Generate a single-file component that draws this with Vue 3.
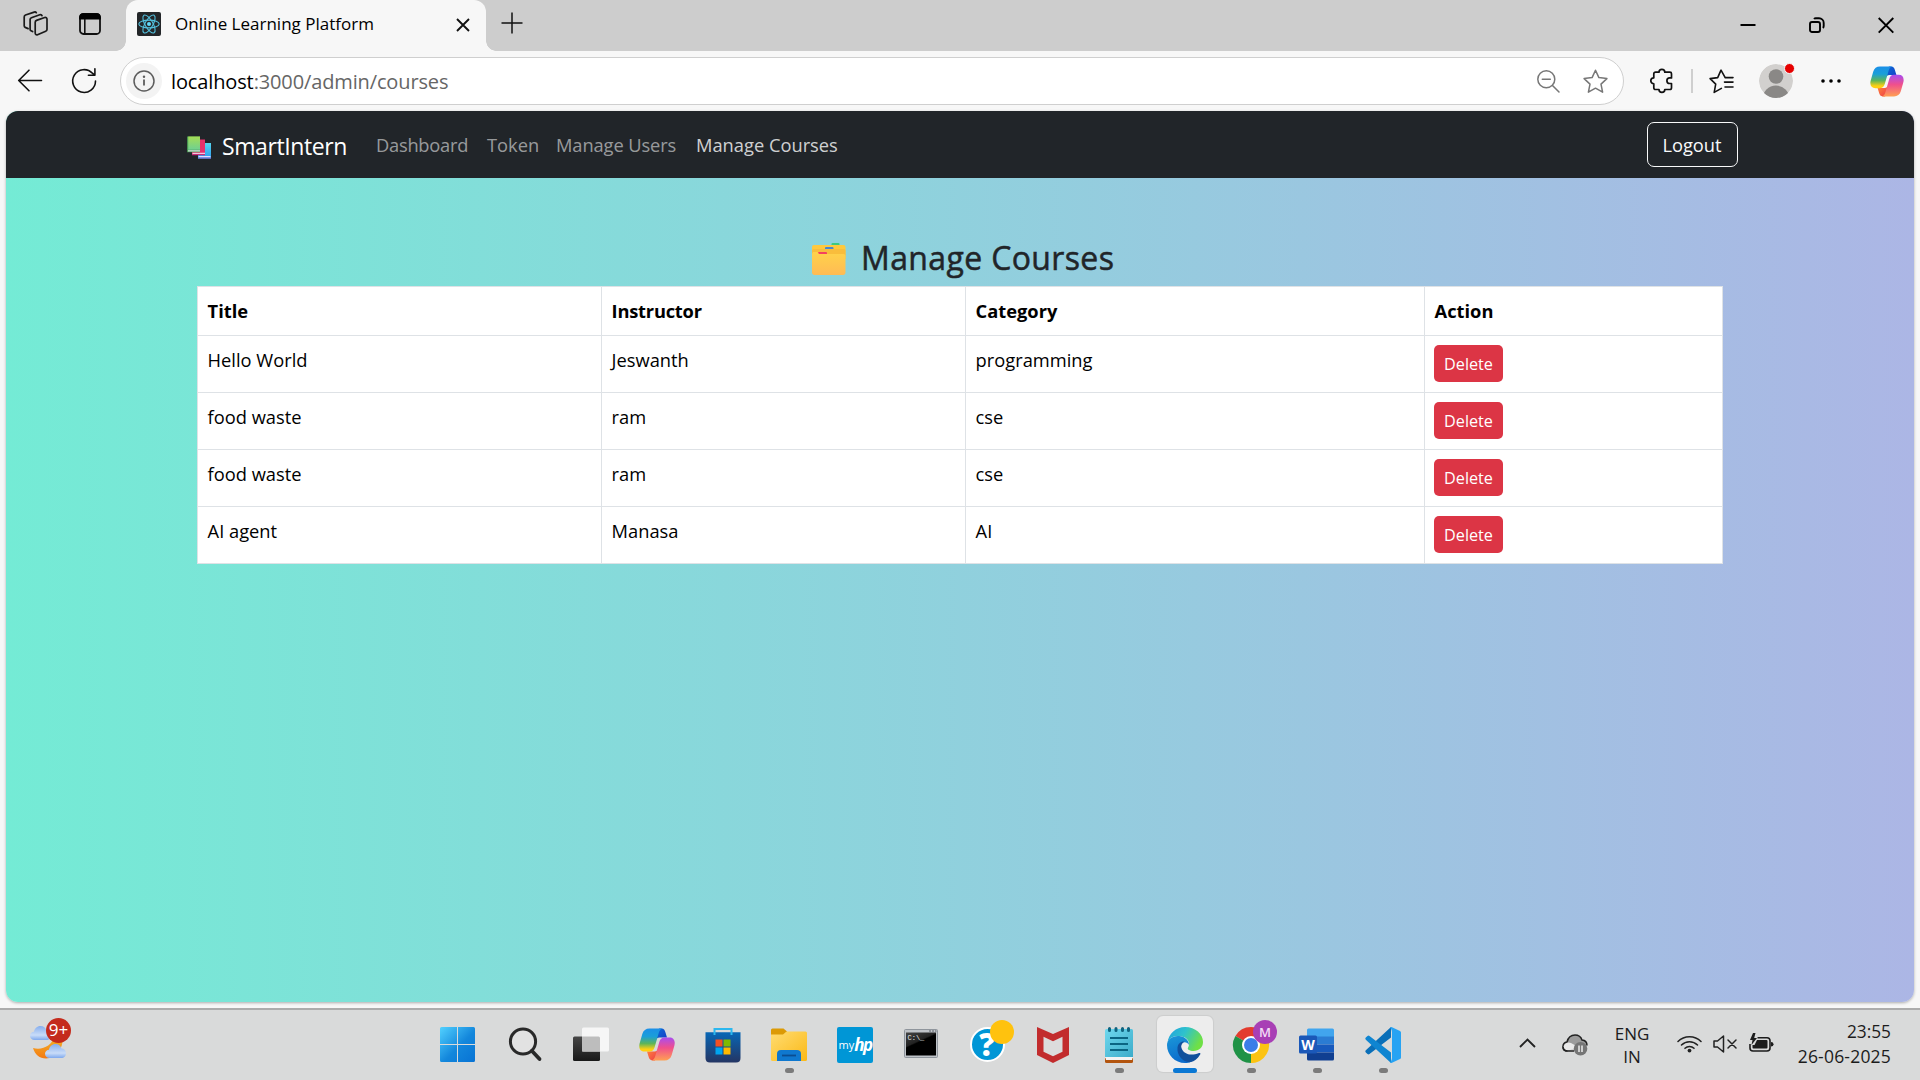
<script setup>
const links = [
  { label: 'Dashboard', cls: 'dash' },
  { label: 'Token', cls: 'token' },
  { label: 'Manage Users', cls: 'users' },
  { label: 'Manage Courses', cls: 'courses active' },
]
const courses = [
  { id: 1, title: 'Hello World', instructor: 'Jeswanth', category: 'programming' },
  { id: 2, title: 'food waste', instructor: 'ram', category: 'cse' },
  { id: 3, title: 'food waste', instructor: 'ram', category: 'cse' },
  { id: 4, title: 'AI agent', instructor: 'Manasa', category: 'AI' },
]
</script>

<template>
  <div class="screen">
    <svg class="defs" width="0" height="0" aria-hidden="true">
      <defs>
        <linearGradient id="cpA" x1="0" y1="0" x2="0" y2="1">
          <stop offset="0" stop-color="#1b8fe8" /><stop offset=".35" stop-color="#1a9fd8" /><stop offset=".65" stop-color="#5db55a" /><stop offset=".9" stop-color="#ffd012" />
        </linearGradient>
        <linearGradient id="cpB" x1="0" y1="0" x2="0" y2="1">
          <stop offset="0" stop-color="#a94cf0" /><stop offset=".45" stop-color="#f0508c" /><stop offset="1" stop-color="#ffa052" />
        </linearGradient>
        <linearGradient id="cpC" x1="0" y1="0" x2="1" y2="1">
          <stop offset="0" stop-color="#0b6fd8" /><stop offset="1" stop-color="#1839c4" />
        </linearGradient>
        <linearGradient id="cpD" x1="0" y1="0" x2="1" y2="1">
          <stop offset="0" stop-color="#ff8a3c" /><stop offset="1" stop-color="#ee3a48" />
        </linearGradient>
        <symbol id="copilot" viewBox="0 0 36 33">
          <path d="M20 .6h2.600c2.200 0 3.200 1.600 3.800 3.600l1.600 5.400h-7.500c-2 0-3.100 1-3.700 2.900z" fill="url(#cpC)" />
          <path d="M16 32.400h-2.600c-2.200 0-3.200-1.600-3.800-3.600L8 23.400h7.500c2 0 3.100-1 3.700-2.900z" fill="url(#cpD)" />
          <path d="M10.500.5h13c-2 .4-3 2-3.700 4.200L15.700 19c-.9 3-2.400 4.600-5.200 4.600H5.600C1.500 23.600-.6 20.500.6 15.600L3.300 6C4.400 2.400 6.800.5 10.500.5z" fill="url(#cpA)" />
          <path d="M25.500 32.500h-13c2-.4 3-2 3.700-4.200L20.300 14c.9-3 2.400-4.600 5.200-4.600h4.900c4.100 0 6.200 3.100 5 8L32.700 27c-1.100 3.600-3.500 5.500-7.200 5.500z" fill="url(#cpB)" />
        </symbol>
      </defs>
    </svg>

    <header class="tabs">
      <svg class="collections" width="26" height="26" viewBox="0 0 26 26" fill="none" stroke="#1a1a1a" stroke-width="1.700" stroke-linejoin="round" stroke-linecap="round">
        <path d="M12.200 11.200c0-.8.500-1.500 1.300-1.800l8.200-2.900c1.200-.4 2.300.4 2.300 1.600v10.300c0 .8-.5 1.500-1.300 1.800l-8.200 3.500c-1.200.5-2.300-.3-2.300-1.600z" />
        <path d="M9.600 20.600 8 19.800c-.6-.3-.9-.9-.9-1.600V8.600c0-.9.500-1.600 1.300-1.900l8.400-3c1-.3 1.900.1 2.200.9" />
        <path d="M5.100 17.600 2.200 16.400c-.7-.3-1-.9-1-1.600V5.900C1.200 5 1.700 4.300 2.500 4l8.700-2.900c.9-.3 1.700 0 2.100.6" />
      </svg>
      <svg class="actions" width="22" height="22" viewBox="0 0 22 22">
        <rect x="1" y="1" width="20" height="20" rx="3.500" fill="none" stroke="#111" stroke-width="1.800" />
        <path d="M.2 6.500V4A3.800 3.800 0 0 1 4 .2h14A3.800 3.800 0 0 1 21.800 4v2.500z" fill="#000" /><path d="M5.800 6v15" stroke="#111" stroke-width="1.600" />
      </svg>
      <div class="tab">
        <svg class="favicon" width="24" height="24" viewBox="0 0 24 24">
          <rect width="24" height="24" rx="2" fill="#232629" />
          <g fill="none" stroke="#53c1de" stroke-width="1.100">
            <ellipse cx="12" cy="12" rx="10.200" ry="3.900" /><ellipse cx="12" cy="12" rx="10.200" ry="3.900" transform="rotate(60 12 12)" /><ellipse cx="12" cy="12" rx="10.200" ry="3.900" transform="rotate(120 12 12)" />
          </g>
          <circle cx="12" cy="12" r="2" fill="#61dafb" />
        </svg>
        <span class="tab-title">Online Learning Platform</span>
        <svg class="tab-x" width="14" height="14" viewBox="0 0 14 14"><path d="M1 1l12 12M13 1L1 13" stroke="#111" stroke-width="1.900" /></svg>
      </div>
      <svg class="plus" width="22" height="22" viewBox="0 0 22 22"><path d="M11 .5v21M.5 11h21" stroke="#111" stroke-width="1.500" /></svg>
      <div class="win">
        <svg width="16" height="16" viewBox="0 0 16 16"><path d="M.5 8h15" stroke="#000" stroke-width="2" /></svg>
        <svg width="16" height="16" viewBox="0 0 16 16" fill="none" stroke="#000" stroke-width="1.900"><rect x="1" y="5" width="10" height="10" rx="2" /><path d="M5 2c.5-.6 1-.8 1.800-.8H10a4.700 4.700 0 0 1 4.700 4.700v3.200c0 .8-.2 1.300-.8 1.800" /></svg>
        <svg width="16" height="16" viewBox="0 0 16 16"><path d="M.7 1l14.600 14.600M15.300 1L.7 15.600" stroke="#000" stroke-width="1.900" /></svg>
      </div>
    </header>

    <div class="toolbar">
      <svg class="back" width="25" height="23" viewBox="0 0 25 23" fill="none" stroke="#111" stroke-width="1.600" stroke-linecap="round" stroke-linejoin="round"><path d="M23.500 11.500H.7M11 1.200L.7 11.500 11 21.800" /></svg>
      <svg class="refresh" width="25" height="26" viewBox="0 0 25 26" fill="none" stroke="#111" stroke-width="1.600" stroke-linecap="round" stroke-linejoin="round"><path d="M23.500 13A11.400 11.400 0 1 1 20.400 5.200l2.400 2M22.900.7v6.500h-6.500" /></svg>
      <div class="address">
        <div class="info"><svg width="22" height="22" viewBox="0 0 22 22" fill="none" stroke="#5c5c5c"><circle cx="11" cy="11" r="10" stroke-width="1.500" /><path d="M11 9.500v6" stroke-width="1.800" /><circle cx="11" cy="6.700" r="1.200" fill="#5c5c5c" stroke="none" /></svg></div>
        <span class="url"><b>localhost</b>:3000/admin/courses</span>
        <svg class="zoomout" width="23" height="23" viewBox="0 0 23 23" fill="none" stroke="#777" stroke-width="1.500" stroke-linecap="round"><circle cx="9.300" cy="9.300" r="8.500" /><path d="M15.500 15.500l6.500 6.500M5.300 9.300h8" /></svg>
        <svg class="star" width="25" height="25" viewBox="0 0 25 25" fill="none" stroke="#777" stroke-width="1.500" stroke-linejoin="round"><path d="M12.500 1.200l3.400 7.400 8 1-5.900 5.500 1.600 8.100-7.100-4-7.100 4L7 15.100 1.100 9.600l8-1z" /></svg>
      </div>
      <svg class="puzzle" width="23" height="25" viewBox="0 0 23 25" fill="none" stroke="#111" stroke-width="1.700" stroke-linejoin="round"><path d="M9 4.200a2.900 2.900 0 0 1 5.800 0h5.100c1 0 1.600.7 1.600 1.600v4.100h-1.800a2.700 2.700 0 0 0 0 5.600h1.800v4.300c0 1-.7 1.700-1.600 1.700h-5.100a2.900 2.900 0 0 1-5.800 0H5.500c-1 0-1.700-.7-1.700-1.700v-4a3 3 0 0 1 0-6V5.800c0-.9.700-1.600 1.700-1.600z" /></svg>
      <i class="sep"></i>
      <svg class="favs" width="25" height="25" viewBox="0 0 25 25" fill="none" stroke="#111" stroke-width="1.600" stroke-linejoin="round" stroke-linecap="round"><path d="M19.500 8.600h-3.300L12 1.200 8.700 8.600l-7.600 1 5.600 5.500-1.500 8.300 7.200-4M16 8.600h8M15.500 13.100H24M16 18h8" /></svg>
      <div class="avatar">
        <svg width="34" height="34" viewBox="0 0 34 34"><defs><clipPath id="avc"><circle cx="17" cy="17" r="17" /></clipPath></defs><g clip-path="url(#avc)"><circle cx="17" cy="17" r="17" fill="#d2d0ce" /><circle cx="17" cy="12.500" r="7.300" fill="#8a8886" /><circle cx="17" cy="35" r="13.500" fill="#8a8886" /></g></svg>
        <i></i>
      </div>
      <svg class="more" width="20" height="4" viewBox="0 0 20 4"><circle cx="2" cy="2" r="1.800" /><circle cx="10" cy="2" r="1.800" /><circle cx="18" cy="2" r="1.800" /></svg>
      <svg class="cop" width="34" height="31"><use href="#copilot" /></svg>
    </div>

    <main class="page">
      <nav class="nav">
        <div class="container">
          <svg class="books" width="24" height="23" viewBox="0 0 24 23">
            <defs>
              <linearGradient id="bkG" x1="0" y1="0" x2="0" y2="1"><stop offset="0" stop-color="#a5dd55" /><stop offset="1" stop-color="#6fd092" /></linearGradient>
              <linearGradient id="bkB" x1="0" y1="0" x2="0" y2="1"><stop offset="0" stop-color="#55d5ee" /><stop offset="1" stop-color="#2b9df0" /></linearGradient>
            </defs>
            <path d="M11 7h13v15.500H11z" fill="url(#bkB)" /><path d="M11.500 20h12v1.300h-12z" fill="#e5dcff" /><path d="M11 21.500h13v1H11z" fill="#9a7be0" />
            <path d="M5 3.500h13V19H5z" fill="#e5316b" /><path d="M5.500 16.700H18V18H5.500z" fill="#f3c5df" /><path d="M5 18.200h13v1H5z" fill="#c02a7d" />
            <path d="M0 .5h13v15.800H0z" fill="#46914f" /><path d="M1.200.5H13v13.300H1.200z" fill="url(#bkG)" /><path d="M1 14.200h12v1.200H1z" fill="#d7e9e2" />
          </svg>
          <span class="brand">SmartIntern</span>
          <a v-for="l in links" :key="l.label" :class="['link', l.cls]">{{ l.label }}</a>
          <button class="logout">Logout</button>
        </div>
      </nav>
      <h3>
        <svg width="34" height="33" viewBox="0 0 34 33">
          <defs><linearGradient id="fd" x1="0" y1="0" x2="0" y2="1"><stop offset="0" stop-color="#ffd24a" /><stop offset="1" stop-color="#ffbb55" /></linearGradient></defs>
          <rect x="19.500" y="0" width="8" height="4" rx="1" fill="#3fc97f" />
          <rect x="0" y="2" width="33.500" height="12" rx="2" fill="#ffc93e" />
          <rect x="13" y="4" width="8.500" height="4" rx="1" fill="#4a87d0" />
          <path d="M0 8c0-1.500 1-2 2-2h29.500c1 0 2 .5 2 2v8H0z" fill="#f9bd3c" />
          <rect x="6" y="9" width="9" height="4" rx="1" fill="#f5415f" />
          <path d="M0 11.500C0 9.500 1 9 2 9h3c1 0 1.400 2 2.500 2h24c1 0 2 .7 2 2v16.500c0 1.500-1 2.500-2.500 2.500H2.500C1 32 0 31 0 29.500z" fill="url(#fd)" />
        </svg>
        <span>Manage Courses</span>
      </h3>
      <table>
        <colgroup><col class="c1" /><col class="c2" /><col class="c3" /><col class="c4" /></colgroup>
        <thead><tr><th>Title</th><th class="t2">Instructor</th><th>Category</th><th>Action</th></tr></thead>
        <tbody>
          <tr v-for="c in courses" :key="c.id">
            <td>{{ c.title }}</td><td>{{ c.instructor }}</td><td>{{ c.category }}</td><td class="act"><button class="delete">Delete</button></td>
          </tr>
        </tbody>
      </table>
    </main>

    <footer class="taskbar">
      <div class="weather">
        <svg width="42" height="42" viewBox="0 0 42 42">
          <defs>
            <linearGradient id="wc" x1="0" y1="0" x2="0" y2="1"><stop offset="0" stop-color="#86aeee" /><stop offset=".65" stop-color="#c9dcf8" /><stop offset="1" stop-color="#7fa9ee" /></linearGradient>
            <linearGradient id="mo" x1="0" y1="0" x2="0" y2="1"><stop offset="0" stop-color="#f3b52a" /><stop offset="1" stop-color="#f47a12" /></linearGradient>
            <path id="cloud" d="M4.500 14C2 14 0 12.200 0 9.800 0 7.500 1.800 5.800 4 5.700 4.500 2.500 7 0 10.500 0c3 0 5.300 1.800 6 4.500 2.500 0 4.500 2 4.500 4.700S19 14 16.500 14z" />
          </defs>
          <path d="M24 18.500h9c0 13-7 22-17 22-6.500 0-11-4-13-10.500 9 2.500 19-2 21-11.500z" fill="url(#mo)" />
          <use href="#cloud" fill="url(#wc)" y="8" />
          <use href="#cloud" fill="url(#wc)" x="15" y="26" />
        </svg>
        <span class="badge">9+</span>
      </div>

      <div class="apps">
        <div class="app start"><svg width="35" height="35" viewBox="0 0 35 35"><defs><linearGradient id="ws" gradientUnits="userSpaceOnUse" x1="0" y1="0" x2="35" y2="35"><stop offset="0" stop-color="#52d1ff" /><stop offset=".55" stop-color="#1387dc" /><stop offset="1" stop-color="#0873d4" /></linearGradient></defs><path d="M1.500 0H17v17H0V1.500Q0 0 1.500 0zM18 0h15.500Q35 0 35 1.500V17H18zM0 18h17v17H1.500Q0 35 0 33.500zM18 18h17v15.500q0 1.500-1.500 1.500H18z" fill="url(#ws)" /></svg></div>
        <div class="app"><svg width="35" height="35" viewBox="0 0 35 35" fill="none" stroke="#292929"><circle cx="15" cy="14.500" r="12.600" stroke-width="3" fill="#e2e2e2" /><path d="M24 24l7.500 8" stroke-width="3.800" stroke-linecap="round" /></svg></div>
        <div class="app"><svg width="36" height="35" viewBox="0 0 36 35"><defs><linearGradient id="tv" x1="0" y1="0" x2="0" y2="1"><stop offset="0" stop-color="#464646" /><stop offset="1" stop-color="#181818" /></linearGradient></defs><rect y="9.500" width="27" height="24.500" rx="1.500" fill="url(#tv)" /><rect x="9" y=".5" width="27" height="24" rx="1.500" fill="#f6f6f6" /><path d="M9 9.500h16.500q1.500 0 1.500 1.500v13.500H9z" fill="#bdbdbd" /></svg></div>
        <div class="app"><svg width="36" height="33"><use href="#copilot" /></svg></div>
        <div class="app"><svg width="36" height="36" viewBox="0 0 36 36"><defs><linearGradient id="st" x1="0" y1="0" x2="0" y2="1"><stop offset="0" stop-color="#0867b6" /><stop offset="1" stop-color="#243563" /></linearGradient></defs><path d="M.5 5.200h35V31c0 3-1.500 4.500-4.500 4.500H5c-3 0-4.500-1.500-4.500-4.500z" fill="url(#st)" /><path d="M9.500 8V2h17v6" fill="none" stroke="#2cb7ee" stroke-width="2" /><path d="M10.500 12.500h7v7h-7z" fill="#f25022" /><path d="M18.500 12.500h7v7h-7z" fill="#7fba00" /><path d="M10.500 20.500h7v7h-7z" fill="#00a4ef" /><path d="M18.500 20.500h7v7h-7z" fill="#ffb900" /></svg></div>
        <div class="app run"><svg width="36" height="34" viewBox="0 0 36 34"><defs><linearGradient id="fx" x1="0" y1="0" x2="1" y2="1"><stop offset="0" stop-color="#ffdc72" /><stop offset="1" stop-color="#fbb917" /></linearGradient></defs><path d="M0 2Q0 .5 1.500.5h11l3.500 3V9H0z" fill="#dc9a05" /><path d="M0 6.500h12l3.500-3H34.500q1.500 0 1.500 1.500v26.500q0 1.500-1.500 1.500H1.500Q0 33 0 31.500z" fill="url(#fx)" /><path d="M6 33v-7q0-4 4-4h16q4 0 4 4v7z" fill="#0f78cf" /><path d="M11 27.500h14" stroke="#0a4d91" stroke-width="1.800" /></svg></div>
        <div class="app"><div class="hp"><span>my</span><b>hp</b></div></div>
        <div class="app"><svg class="cmd" width="34" height="29" viewBox="0 0 34 29"><defs><linearGradient id="cm" x1="0" y1="0" x2=".6" y2="1"><stop offset="0" stop-color="#444" /><stop offset=".45" stop-color="#222" /><stop offset=".5" stop-color="#000" /></linearGradient></defs><rect x=".5" y=".5" width="33" height="28" rx="1" fill="#bfc3c8" stroke="#8f959c" /><path d="M25 2h2M28 2h2M31 2h1.500" stroke="#5a6068" /><rect x="2" y="3.500" width="30" height="23" fill="url(#cm)" /><text x="3.500" y="11" font-size="7" fill="#eee" font-family="Liberation Mono, monospace">C:\_</text></svg></div>
        <div class="app"><div class="help"><span>?</span><i></i></div></div>
        <div class="app"><svg width="32" height="36" viewBox="0 0 32 36"><path d="M0 0l16 7L32 0v28l-16 8L0 28z" fill="#c22c2d" /><path d="M6.500 9.800l9.500 4.400 9.500-4.400v15L16 29.300l-9.500-4.500z" fill="#dcdcdc" /></svg></div>
        <div class="app run"><svg width="28" height="36" viewBox="0 0 28 36"><defs><linearGradient id="np" x1="0" y1="0" x2="1" y2="1"><stop offset="0" stop-color="#6fd8ee" /><stop offset="1" stop-color="#3cabc9" /></linearGradient></defs><path d="M0 31h28v3.500q0 1.500-1.500 1.500h-25Q0 36 0 34.500z" fill="#b3550f" /><path d="M0 29h28l-1 4H1z" fill="#f3f3f3" /><path d="M0 3.500Q0 2 1.500 2h25Q28 2 28 3.500V30H0z" fill="url(#np)" /><path d="M4.500 1.500v2M11 1.500v2M17.500 1.500v2M23.500 1.500v2" stroke="#10637f" stroke-width="3" stroke-linecap="round" /><path d="M5 11h18M5 17h18M5 23h18" stroke="#0b6583" stroke-width="1.800" /></svg></div>
        <div class="app run current"><svg width="36" height="36" viewBox="0 0 36 36">
          <defs>
            <linearGradient id="e1" x1="0" y1="0" x2="1" y2=".4"><stop offset="0" stop-color="#1e9fe0" /><stop offset=".5" stop-color="#2fc2cc" /><stop offset="1" stop-color="#6fe046" /></linearGradient>
            <linearGradient id="e2" x1="0" y1="0" x2=".3" y2="1"><stop offset="0" stop-color="#1b98d8" /><stop offset="1" stop-color="#0b6ccc" /></linearGradient>
          </defs>
          <path d="M.5 16C1.500 6.500 9 0 18 0c10.500 0 18 7 18 15 0 5.500-4 9-9.500 9-4 0-6.500-1.600-5.500-3.200 2.300-3.600 1-9-4.500-10.800C9 7.500 2 10 .5 16z" fill="url(#e1)" />
          <path d="M0 18C0 12 6 8.200 12.500 9c5.500.7 9.500 4.500 9.500 9-2-4-7-3.800-8.500.5C12 25 17 31 25 34.500 22.500 35.700 20 36 18 36 8 36 0 28 0 18z" fill="url(#e2)" />
          <path d="M10.500 20.500c.5-4 3.500-6.500 7-6 -2.500 1.500-4 4-3 6.500 2 6 9 8.500 17.500 5 1-.4 1.800.3 1.300 1.200C30.500 32 27 34.300 24 35c-7 1.200-14.500-6-13.500-14.500z" fill="#104f9c" />
        </svg></div>
        <div class="app run"><div class="chrome"><svg width="36" height="36" viewBox="0 0 36 36"><path d="M18 18L2.400 9A18 18 0 0 1 33.600 9z" fill="#e33b2e" /><path d="M18 18L33.600 9A18 18 0 0 1 18 36z" fill="#fcc312" /><path d="M18 18v18A18 18 0 0 1 2.400 9z" fill="#1f9246" /><path d="M18 9.500h16l-.5 1.500A18 18 0 0 1 18 36l7.500-14z" fill="#fcc312" /><circle cx="18" cy="18" r="9" fill="#fff" /><circle cx="18" cy="18" r="7" fill="#3b7de8" /></svg><span>M</span></div></div>
        <div class="app run"><svg width="36" height="33" viewBox="0 0 36 33"><path d="M8 2Q8 .5 9.500.5h24Q35 .5 35 2v7H8z" fill="#41a5ee" /><path d="M8 8.500h27v8H8z" fill="#2b7cd3" /><path d="M8 16.500h27v8H8z" fill="#185abd" /><path d="M8 24.500h27V31q0 1.500-1.500 1.500h-24Q8 32.500 8 31z" fill="#103f91" /><rect y="7.500" width="18" height="18" rx="1.500" fill="#1b58b8" /><text x="9" y="21.500" text-anchor="middle" font-size="14" font-weight="700" fill="#fff" font-family="Open Sans, sans-serif">W</text></svg></div>
        <div class="app run"><svg width="36" height="36" viewBox="0 0 36 36"><path d="M26 0v10.500L4.500 27q-1 .8-2 0L.8 25.400Q-.3 24.400.8 23.300z" fill="#0a6fb8" /><path d="M26 36V25.500L4.500 9q-1-.8-2 0L.8 10.600Q-.3 11.600.8 12.700z" fill="#0f85d1" /><path d="M26.500 0L35 4q1 .5 1 1.500v25q0 1-1 1.500l-8.500 4q-.8.200-1.200-.8Q27 33 27 31V5q0-2-1.700-4.200.4-.9 1.200-.8z" fill="#27a3f3" /></svg></div>
      </div>

      <div class="tray">
        <svg class="chev" width="17" height="10" viewBox="0 0 17 10"><path d="M1 9l7.500-7.500L16 9" fill="none" stroke="#222" stroke-width="1.900" /></svg>
        <svg class="drive" width="26" height="22" viewBox="0 0 26 22"><path d="M5.500 17C2.500 17 1 15 1 12.500S3 8.300 5 8c1-4 4-7 8-7 3.500 0 6 2 7 5 3 .3 5 2.500 5 5.500" fill="#9b9b9b" stroke="#222" stroke-width="1.500" /><path d="M1.500 12.500C3 9 6 7.500 9 9l9 5-12 2.500q-4-.5-4.500-4z" fill="#e9e9e9" /><path d="M5.500 17C2.500 17 1 15 1 12.500M5.500 17H12" fill="none" stroke="#222" stroke-width="1.500" /><circle cx="18.500" cy="14.800" r="6.800" fill="#757575" /><path d="M17 11.500v6.500M20 11.500v6.500" stroke="#fff" stroke-width="1.300" /></svg>
        <div class="lang"><span>ENG</span><span>IN</span></div>
        <svg class="wifi" width="25" height="18" viewBox="0 0 25 18" fill="none" stroke="#222" stroke-width="1.600" stroke-linecap="round"><path d="M1 6.500a16.300 16.300 0 0 1 23 0M4.500 10a11.400 11.400 0 0 1 16 0M8 13.300a6.400 6.400 0 0 1 9 0" /><circle cx="12.500" cy="15.600" r="1.900" fill="#222" stroke="none" /></svg>
        <svg class="vol" width="24" height="18" viewBox="0 0 24 18" fill="none" stroke="#222" stroke-width="1.500" stroke-linejoin="round" stroke-linecap="round"><path d="M1 6h3.500L10.500 1v16l-6-5H1zM15 5l8 8M23 5l-8 8" /></svg>
        <svg class="bat" width="25" height="20" viewBox="0 0 25 20"><path d="M8.500 4.700H18q3 0 3 3V15q0 3-3 3H4q-3 0-3-3v-4" fill="none" stroke="#1c1c1c" stroke-width="1.600" /><path d="M8 7h9.500q1 0 1 1v6.500q0 1-1 1h-13q-1 0-1-1V12h2z" fill="#1c1c1c" /><path d="M22 9q2.500 0 2.500 2.300T22 13.600z" fill="#1c1c1c" /><path d="M4 0L1 7h2.500L2.500 12 8 5H5.200L6.500 0z" fill="#1c1c1c" /></svg>
        <div class="clock"><span class="time">23:55</span><span class="date">26-06-2025</span></div>
      </div>
    </footer>
  </div>
</template>

<style>
body { margin: 0; overflow: hidden; }
</style>

<style scoped>
* { box-sizing: border-box; }
svg { display: block; flex: none; overflow: visible; }
.defs { position: absolute; }
.screen { width: 1920px; height: 1080px; display: flex; flex-direction: column; background: #f7f7f7; overflow: hidden; font-family: "Open Sans", "Noto Sans", sans-serif; color: #000; white-space: nowrap; }

.tabs { height: 51px; flex: none; display: flex; background: #cdcdcd; }
.collections { margin: 11px 0 0 23px; }
.actions { margin: 13px 0 0 30px; }
.tab { position: relative; margin-left: 25px; width: 360px; height: 51px; display: flex; background: #f7f7f7; border-radius: 12px 12px 0 0; }
.tab::before, .tab::after { content: ""; position: absolute; bottom: 0; width: 10px; height: 10px; }
.tab::before { left: -10px; background: radial-gradient(circle at 0 0, transparent 9.500px, #f7f7f7 10px); }
.tab::after { right: -10px; background: radial-gradient(circle at 100% 0, transparent 9.500px, #f7f7f7 10px); }
.favicon { margin: 12px 0 0 11px; }
.tab-title { margin-left: 14px; width: 281px; font-size: 17px; line-height: 48px; }
.tab-x { margin-top: 18px; }
.plus { margin: 12px 0 0 15px; }
.win { margin-left: auto; padding: 17px 26px 0 0; display: flex; gap: 53px; }

.toolbar { height: 60px; flex: none; display: flex; }
.back { margin: 18px 0 0 18px; }
.refresh { margin: 17px 0 0 29px; }
.address { margin: 6px 0 0 23px; width: 1504px; height: 48px; border: 1.500px solid #cfcfcf; border-radius: 24px; background: #fff; display: flex; align-items: center; }
.info { margin-left: 5px; width: 36px; height: 36px; border-radius: 50%; background: #f3f3f3; display: flex; align-items: center; justify-content: center; }
.url { margin-left: 9px; width: 1366px; font-size: 20px; letter-spacing: -.13px; color: #666; }
.url b { font-weight: 400; color: #000; }
.star { margin-left: 23px; }
.puzzle { margin: 17px 0 0 26px; }
.sep { width: 2px; height: 24px; margin: 18px 0 0 18px; background: #cfcfcf; }
.favs { margin: 18px 0 0 16px; }
.avatar { position: relative; width: 34px; height: 34px; margin: 13px 0 0 25px; }
.avatar i { position: absolute; right: -2px; top: -1px; width: 11px; height: 11px; border-radius: 50%; background: #e60000; border: 1px solid #f7f7f7; }
.more { margin: 28px 0 0 28px; }
.cop { margin: 15px 0 0 29px; }

.page { width: 1908px; height: 891px; flex: none; margin: 0 6px; border-radius: 12px; overflow: hidden; background: linear-gradient(to right, #74ebd5, #acb6e5); box-shadow: 0 1px 3px rgba(0, 0, 0, .3); }
.nav { height: 67px; background: #212529; }
.container { width: 1556px; height: 67px; margin: 0 auto; display: flex; align-items: center; }
.books { margin: 5px 0 0 5px; }
.brand { margin-left: 11px; width: 154px; color: #fff; font-size: 23px; letter-spacing: -.4px; line-height: 36px; padding-top: 2px; }
.link { font-size: 18.300px; line-height: 29px; color: rgba(255, 255, 255, .55); margin-top: -1px; }
.link.active { color: rgba(255, 255, 255, .8); }
.dash { width: 111px; letter-spacing: -.25px; }
.token { width: 69px; }
.users { width: 140px; letter-spacing: -.1px; }
.logout { margin-left: auto; width: 91px; height: 45px; padding: 0 1px 0 0; border: 1px solid #f8f9fa; border-radius: 7px; background: none; color: #f8f9fa; font: 18.300px "Open Sans", sans-serif; }
h3 { margin: 60px 0 0 806px; height: 48px; display: flex; font-weight: 500; font-size: 32px; line-height: 40px; letter-spacing: .36px; color: #212529; -webkit-text-stroke: .5px #212529; }
h3 svg { margin-top: 5px; }
h3 span { margin-left: 15px; }
table { margin-left: 191px; width: 1526px; table-layout: fixed; border-collapse: collapse; background: #fff; font-size: 18.300px; line-height: 28px; }
.c1 { width: 404px; }
.c2 { width: 364px; }
.c3 { width: 459px; }
.c4 { width: 298px; }
th, td { border: 1px solid #dee2e6; padding: 10px 9px 9px 9.600px; text-align: left; vertical-align: top; }
thead tr { height: 49px; }
th { font-weight: 700; }
.t2 { letter-spacing: -.22px; }
tbody tr { height: 57px; }
.act { padding: 9px; }
.delete { display: block; width: 69px; height: 37px; padding: 0; border: 0; border-radius: 5px; background: #dc3545; color: #fff; font: 16.200px "Open Sans", sans-serif; }

.taskbar { height: 72px; flex: none; margin-top: 6px; border-top: 2px solid #acacac; background: #d9dada; display: flex; }
.weather { position: relative; width: 42px; height: 42px; margin: 8px 0 0 30px; }
.badge { position: absolute; left: 16px; top: 0; width: 25px; height: 25px; border-radius: 50%; background: #c42b1c; color: #fff; font-size: 17px; line-height: 24px; text-align: center; }
.apps { margin-left: 354px; display: flex; }
.app { position: relative; width: 66px; height: 70px; display: flex; align-items: center; justify-content: center; padding-bottom: 1px; }
.start { padding-right: 3px; }
.run::after { content: ""; position: absolute; left: 29px; top: 58px; width: 9px; height: 5px; border-radius: 3px; background: #7b7b7b; }
.current::before { content: ""; position: absolute; left: 5px; top: 6px; width: 56px; height: 56px; border-radius: 6px; background: #ededed; box-shadow: 0 0 1px 1px rgba(0, 0, 0, .06); }
.current svg { position: relative; }
.current::after { left: 21px; width: 24px; background: #0a78d4; }
.cmd { margin-bottom: 2px; }
.hp { width: 36px; height: 36px; border-radius: 2px; background: #0096d6; color: #fff; display: flex; align-items: center; justify-content: center; font-size: 11px; line-height: 36px; }
.hp b { font: italic 700 17px "Open Sans", sans-serif; letter-spacing: -1.500px; }
.help { position: relative; width: 35px; height: 35px; border-radius: 50%; border: 2px solid #fff; background: #0096d6; color: #fff; text-align: center; font-size: 31px; font-weight: 800; line-height: 31px; }
.help i { position: absolute; left: 18px; top: -9px; width: 24px; height: 24px; border-radius: 50%; background: #ffc20e; }
.chrome { position: relative; }
.chrome span { position: absolute; left: 20px; top: -7px; width: 24px; height: 24px; border-radius: 50%; background: #a83fb5; color: #f2dcf5; font-size: 13px; font-weight: 600; line-height: 24px; text-align: center; }
.tray { margin-left: auto; display: flex; align-items: center; width: 401px; color: #1c1c1c; font-size: 17px; line-height: 24px; }
.chev { margin-top: -4px; }
.drive { margin: 0 0 0 26px; }
.lang { width: 60px; margin: -1px 0 0 14px; display: flex; flex-direction: column; text-align: center; line-height: 23px; }
.wifi { margin: -2px 0 0 15px; }
.vol { margin: -2px 0 0 11px; }
.bat { margin: -4px 0 0 12px; }
.clock { display: flex; flex-direction: column; text-align: right; margin: -3px 29px 0 auto; }
.time { font-size: 17.300px; }
.date { font-size: 17.500px; letter-spacing: .2px; }
</style>
